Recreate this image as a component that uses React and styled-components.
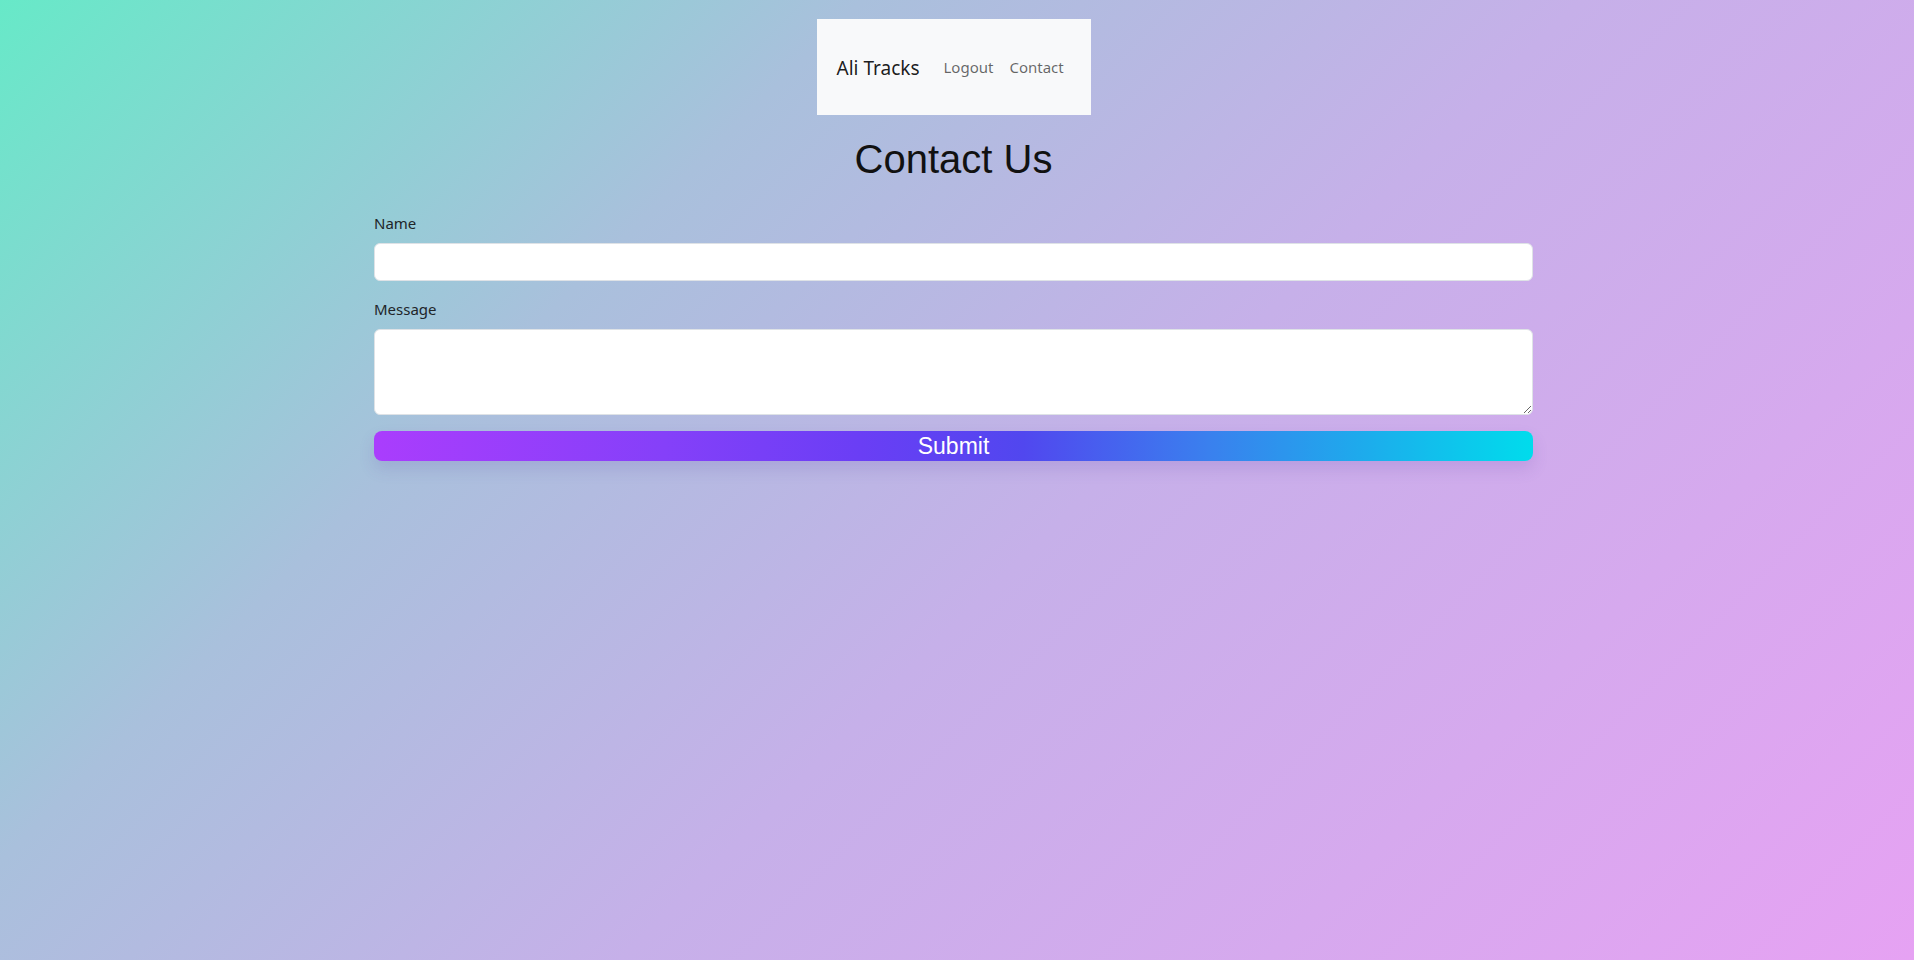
import styled, { createGlobalStyle } from "styled-components";

const GlobalStyle = createGlobalStyle`
  html, body {
    margin: 0;
    padding: 0;
  }
  body {
    min-height: 100vh;
    background: linear-gradient(135deg, #67e9c8 0%, #a9c0dc 30%, #c6b0e9 55%, #e6a2f3 100%);
    background-attachment: fixed;
    font-family: "Open Sans", "Noto Sans", sans-serif;
  }
  * { box-sizing: border-box; }
`;

const Page = styled.div`
  display: flex;
  flex-direction: column;
  align-items: center;
  padding: 19px 7px 0 0;
`;

const Navbar = styled.nav`
  display: flex;
  align-items: center;
  height: 96px;
  width: 274px;
  padding: 0 20px;
  background: #f8f9fa;
`;

const Brand = styled.span`
  font-family: "Noto Sans", "Open Sans", sans-serif;
  font-size: 19px;
  white-space: nowrap;
  flex-shrink: 0;
  color: rgba(0, 0, 0, 0.9);
  margin-right: 16px;
  margin-top: 2px;
`;

const NavLink = styled.a`
  font-family: "Noto Sans", "Open Sans", sans-serif;
  font-size: 15px;
  white-space: nowrap;
  color: rgba(0, 0, 0, 0.6);
  padding: 0 8px;
  text-decoration: none;
`;

const Title = styled.h1`
  font-family: "Liberation Sans", Arial, sans-serif;
  font-weight: 400;
  font-size: 40px;
  color: #111;
  margin: 20px 0 0;
  line-height: 48px;
`;

const Form = styled.form`
  width: 1159px;
  margin-top: 28px;
  display: flex;
  flex-direction: column;
`;

const Field = styled.div`
  display: flex;
  flex-direction: column;
  margin-bottom: 16px;
`;

const Label = styled.label`
  font-family: "Noto Sans", "Open Sans", sans-serif;
  font-size: 15px;
  line-height: 24px;
  color: #212529;
  margin-bottom: 8px;
`;

const Input = styled.input`
  height: 38px;
  border: 1px solid #dee2e6;
  border-radius: 6px;
  background: #fff;
  padding: 6px 12px;
  font-size: 16px;
  outline: none;
`;

const TextArea = styled.textarea`
  height: 86px;
  border: 1px solid #dee2e6;
  border-radius: 6px;
  background: #fff;
  padding: 6px 12px;
  font-size: 16px;
  outline: none;
  resize: vertical;
  display: block;
`;

const SubmitButton = styled.button`
  height: 30px;
  border: none;
  border-radius: 8px;
  background: linear-gradient(90deg, #aa3dfd 0%, #8540f9 25%, #6a3ef5 42%, #5147ef 56%, #3a80ee 72%, #1eaaec 85%, #00dcec 100%);
  color: #fff;
  font-family: "Liberation Sans", Arial, sans-serif;
  font-size: 23px;
  line-height: 30px;
  padding: 0;
  box-shadow: 0 8px 16px rgba(90, 60, 160, 0.15);
  cursor: pointer;
`;

export default function App() {
  return (
    <>
      <GlobalStyle />
      <Page>
        <Navbar>
          <Brand>Ali Tracks</Brand>
          <NavLink href="#">Logout</NavLink>
          <NavLink href="#">Contact</NavLink>
        </Navbar>
        <Title>Contact Us</Title>
        <Form onSubmit={(e) => e.preventDefault()}>
          <Field>
            <Label>Name</Label>
            <Input type="text" />
          </Field>
          <Field>
            <Label>Message</Label>
            <TextArea />
          </Field>
          <SubmitButton type="submit">Submit</SubmitButton>
        </Form>
      </Page>
    </>
  );
}
